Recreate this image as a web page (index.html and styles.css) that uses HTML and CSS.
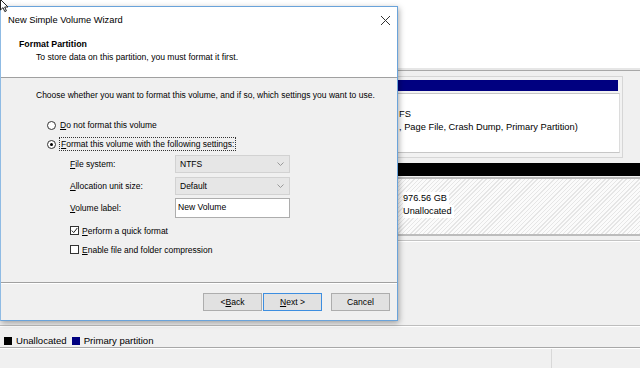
FILE: index.html
```html
<!DOCTYPE html>
<html lang="en">
<head>
	<meta charset="UTF-8">
	<title>New Simple Volume Wizard</title>
	<link rel="stylesheet" href="styles.css">
</head>
<body>
	<div class="mgmt">
		<div class="list_pane"></div>
		<div class="graph_pane">
			<div class="disk_row">
				<div class="vol_card">
					<div class="vol_bar"></div>
					<div class="vol_box">
						<p>&nbsp;</p>
						<p>FS</p>
						<p>, Page File, Crash Dump, Primary Partition)</p>
					</div>
				</div>
			</div>
			<div class="disk_row disk_two">
				<div class="unalloc">
					<div class="black_bar"></div>
					<div class="hatch">
						<p>976.56 GB</p>
						<p>Unallocated</p>
					</div>
				</div>
			</div>
		</div>
		<div class="legend">
			<span class="key key_black"></span><span>Unallocated</span>
			<span class="key key_blue"></span><span>Primary partition</span>
		</div>
		<div class="status_bar">
			<div class="status_cell"></div>
			<div class="status_cell"></div>
		</div>

		<div class="wizard">
			<div class="titlebar">
				<span>New Simple Volume Wizard</span>
				<svg class="close" width="11" height="11" viewBox="0 0 11 11"><path d="M1 1L10 10M10 1L1 10" stroke="#333" stroke-width="1" fill="none"/></svg>
			</div>
			<div class="wiz_head">
				<div class="head_title">Format Partition</div>
				<div class="head_sub">To store data on this partition, you must format it first.</div>
			</div>
			<div class="wiz_body">
				<div class="intro">Choose whether you want to format this volume, and if so, which settings you want to use.</div>
				<div class="radio_row first">
					<span class="radio"></span>
					<span class="rlabel"><u>D</u>o not format this volume</span>
				</div>
				<div class="radio_row">
					<span class="radio on"></span>
					<span class="rlabel focus"><u>F</u>ormat this volume with the following settings:</span>
				</div>
				<div class="field_row first">
					<span class="flabel"><u>F</u>ile system:</span>
					<div class="combo">NTFS<svg width="7" height="4" viewBox="0 0 7 4"><path d="M0.5 0.5L3.5 3.5L6.5 0.5" stroke="#999" fill="none"/></svg></div>
				</div>
				<div class="field_row">
					<span class="flabel"><u>A</u>llocation unit size:</span>
					<div class="combo">Default<svg width="7" height="4" viewBox="0 0 7 4"><path d="M0.5 0.5L3.5 3.5L6.5 0.5" stroke="#999" fill="none"/></svg></div>
				</div>
				<div class="field_row label_row">
					<span class="flabel"><u>V</u>olume label:</span>
					<div class="textbox">New Volume</div>
				</div>
				<div class="check_row first">
					<span class="check"><svg width="7" height="7" viewBox="0 0 7 7"><path d="M0.8 3.6L2.7 5.6L6.3 1" stroke="#222" stroke-width="1" fill="none"/></svg></span>
					<span><u>P</u>erform a quick format</span>
				</div>
				<div class="check_row">
					<span class="check"></span>
					<span><u>E</u>nable file and folder compression</span>
				</div>
			</div>
			<div class="wiz_foot">
				<div class="btn">&lt; <u>B</u>ack</div>
				<div class="btn default"><u>N</u>ext &gt;</div>
				<div class="btn cancel">Cancel</div>
			</div>
		</div>

		<svg class="cursor" width="10" height="14" viewBox="0 0 10 14"><path d="M0.5 0.5L0.5 11L3 8.6L4.8 12.6L6.4 11.9L4.7 8H8L0.5 0.5Z" fill="#fff" stroke="#222" stroke-width="1"/></svg>
	</div>
</body>
</html>
```

FILE: styles.css
```css
*{box-sizing:border-box}
body,div,p,span{margin:0;padding:0}
body{background:#f0f0f0;font-family:"Liberation Sans",Arial,sans-serif;color:#000;overflow:hidden}
.mgmt{width:640px;height:368px;position:relative;overflow:hidden;background:#f0f0f0}

/* disk management behind the dialog */
.list_pane{height:70px;background:#fff;border-bottom:2px solid #e6e6e6;box-shadow:0 1px 0 #a8a8a8}
.graph_pane{height:256px;border-bottom:1px solid #bdbdbd;box-shadow:0 1px 0 #fff}
.disk_row{padding-left:392px;padding-top:6px}
.vol_card{width:231px;height:82px;border:1px solid #d6d6d6;background:#f2f2f2;padding:3px 2px 3px 0}
.vol_bar{height:11px;background:#000080;margin-right:2px}
.vol_box{height:60px;margin-top:2px;background:#fff;border:1px solid #c6c6c6;border-right-color:#dcdcdc;font-size:9.3px;line-height:13.5px;padding:0 0 0 5px;white-space:nowrap;overflow:hidden}
.disk_two{padding-top:5px}
.unalloc{border-bottom:1px solid #c4c4c4;box-shadow:0 1px 0 #fff;padding-bottom:4px}
.black_bar{height:13px;background:#000}
.hatch{height:59px;margin-top:1px;border:2px solid #bcbcbc;border-right:0;background:repeating-linear-gradient(135deg,#fbfbfb 0,#fbfbfb 2px,#e6e6e6 2px,#e6e6e6 3px);padding:13px 0 0 9px;font-size:9.2px;line-height:13px}
.hatch p{display:table;background:#fff;padding-right:2px}
.legend{height:14px;margin-top:8px;display:flex;align-items:center;font-size:9.6px;padding-left:4px;border-bottom:1px solid #a8a8a8}
.key{width:8px;height:8px;margin-right:4px}
.key_black{background:#000}
.key_blue{background:#000080;margin-left:5px}
.status_bar{display:flex;height:30px;border-top:1px solid #fff}
.status_cell{width:552px;border-right:1px solid #d8d8d8}
.status_cell + .status_cell{flex:1;border:0}

/* wizard dialog */
.wizard{position:absolute;left:0;top:6px;width:398px;height:315px;border:1px solid #6aa3da;border-left-color:#8fbbe4;background:#f0f0f0;box-shadow:1px 2px 6px rgba(0,0,0,.35);display:flex;flex-direction:column}
.titlebar{height:26px;background:#fff;display:flex;align-items:center;justify-content:space-between;padding:0 6px 0 7px;font-size:9.3px}
.close{margin-top:1px}
.wiz_head{height:45px;background:#fff;border-bottom:1px solid #a0a0a0;padding:5px 0 0 18px;font-size:8.6px;line-height:12px}
.head_title{font-weight:bold;font-size:8.8px;margin-bottom:1px}
.head_sub{padding-left:17px}
.wiz_body{height:205px;border-bottom:1px solid #a0a0a0;padding:11px 0 0 35px;font-size:8.5px;line-height:12px}
.intro{height:12px}
.radio_row{height:14px;display:flex;align-items:center;margin-top:5px;padding-left:11px}
.radio_row.first{margin-top:17px}
.radio{width:9px;height:9px;border:1px solid #333;border-radius:50%;background:#fff;margin-right:3px;position:relative}
.radio.on::after{content:"";position:absolute;left:2px;top:2px;width:3px;height:3px;border-radius:50%;background:#000}
.rlabel{padding:0 1px;line-height:12px}
.rlabel.focus{border:1px dotted #333}
.field_row{display:flex;align-items:center;margin-top:4px;padding-left:34px}
.field_row.label_row{margin-top:3px}
.flabel{width:105px}
.combo{width:115px;height:18px;background:#e6e6e6;border:1px solid #d2d2d2;display:flex;align-items:center;justify-content:space-between;padding:0 5px 0 4px}
.textbox{width:115px;height:20px;background:#fff;border:1px solid #adadad;padding:2px 0 0 2px;font-size:8.6px}
.check_row{display:flex;align-items:center;height:13px;margin-top:6px;padding-left:34px}
.check{width:9px;height:9px;border:1px solid #333;background:#fff;margin-right:3px;display:flex;align-items:center;justify-content:center}
.wiz_foot{height:37px;border-top:1px solid #fff;display:flex;justify-content:flex-end;align-items:flex-start;padding:9px 7px 0 0}
.btn{width:59px;height:18px;background:#e1e1e1;border:1px solid #adadad;font-size:8.6px;display:flex;align-items:center;justify-content:center}
.btn.default{border-color:#3d8ee0;margin-left:1px}
.btn.cancel{margin-left:9px}
u{text-decoration-thickness:1px;text-underline-offset:1px}
.cursor{position:absolute;left:0;top:-1px}
```
